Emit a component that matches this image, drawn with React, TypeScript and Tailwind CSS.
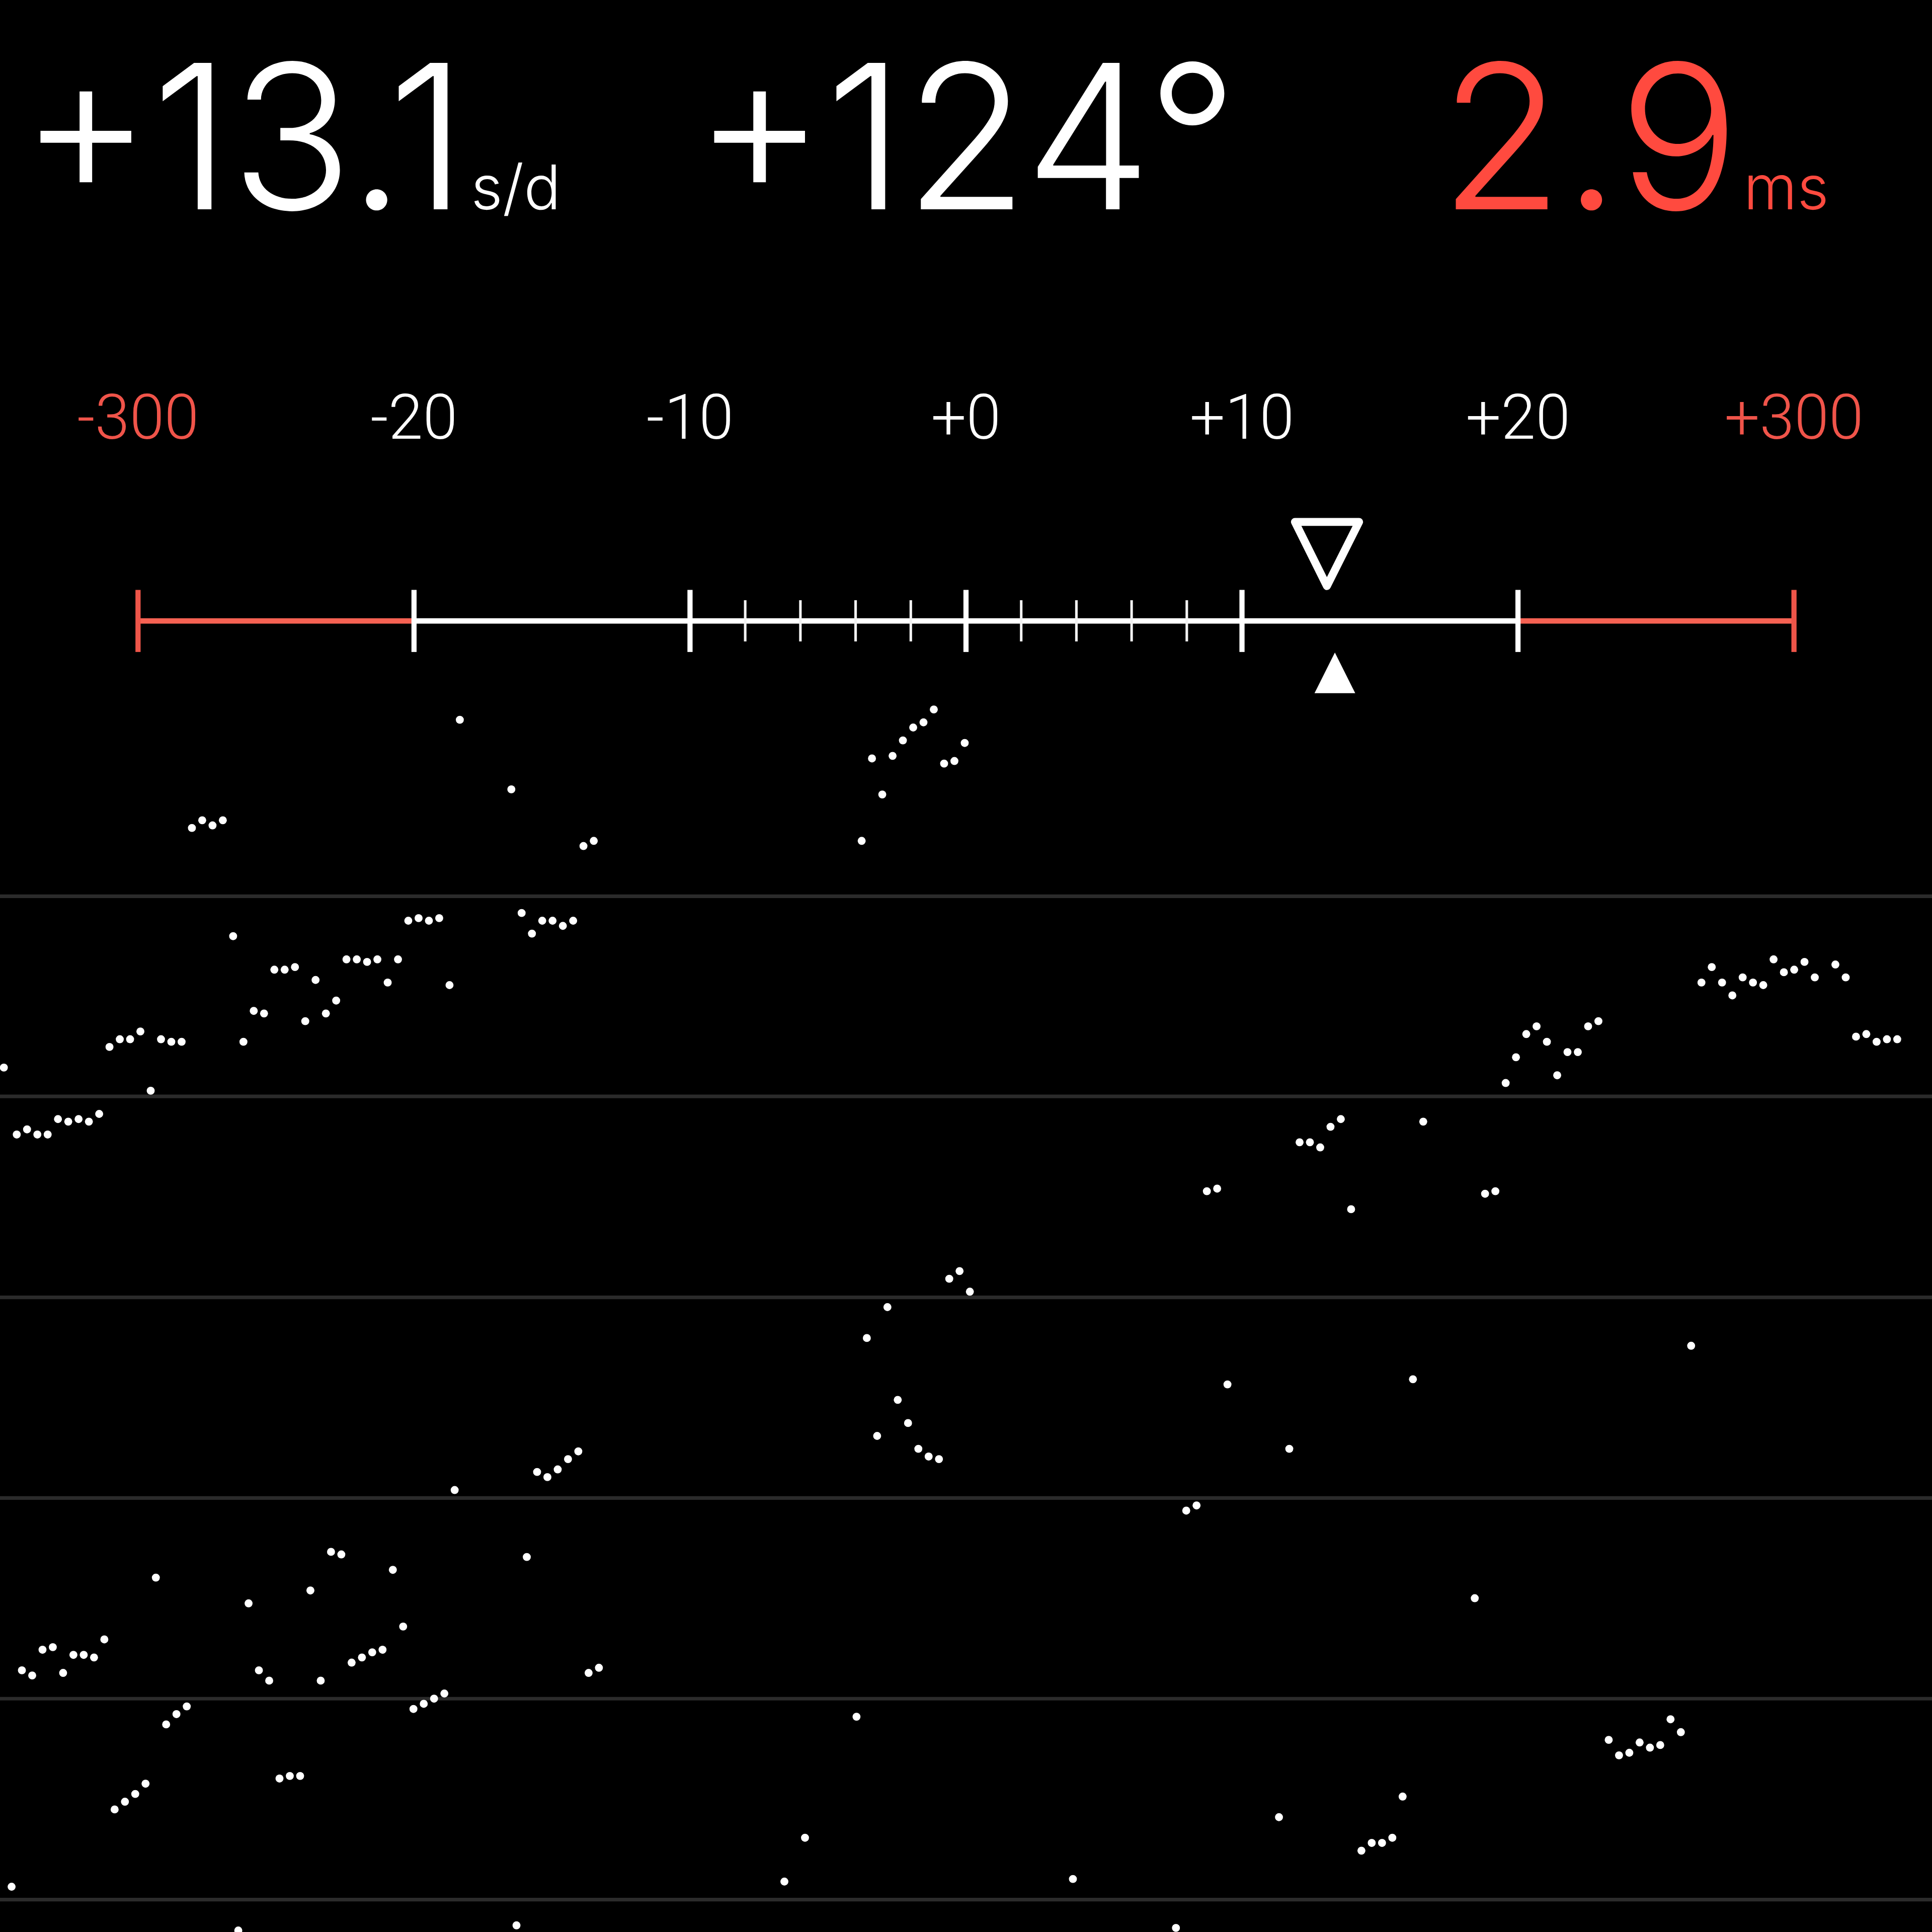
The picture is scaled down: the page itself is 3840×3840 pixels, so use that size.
const READINGS = [
  { label: 'Rate', value: '+13.1', unit: 's/d', className: 'justify-start pl-[40px] text-white' },
  { label: 'Amplitude', value: '+124°', unit: '', className: 'justify-center text-white' },
  { label: 'Beat error', value: '2.9', unit: 'ms', className: 'justify-center pl-[96px] text-[#ff4a3f]' },
]

const SCALE = [
  { text: '-300', limit: true },
  { text: '-20', limit: false },
  { text: '-10', limit: false },
  { text: '+0', limit: false },
  { text: '+10', limit: false },
  { text: '+20', limit: false },
  { text: '+300', limit: true },
]

// Width of one scale column, the drawings are 750 units wide
const STEP = 750 / 7

const MINOR_TICKS = [-4, -3, -2, -1, 1, 2, 3, 4]

const GRID_LINES = [348, 425.7, 503.7, 581.6, 659.5, 737.5]

// One [x, y] pair per recorded beat
const BEATS = [
  [178, 279], [198, 306], [74, 321], [78, 318], [82, 320], [86, 318], [226, 328], [230, 326],
  [158, 357], [162, 356], [166, 357], [170, 356], [202, 354], [206, 362], [210, 357], [214, 357],
  [218, 359], [222, 357], [90, 363], [106, 376], [110, 376], [114, 375], [122, 380], [134, 372],
  [138, 372], [142, 373], [146, 372], [154, 372], [150, 381], [174, 382], [130, 388], [126, 393],
  [118, 396], [98, 392], [102, 393], [94, 404], [42, 406], [46, 403], [50, 403], [54, 400],
  [62, 403], [66, 404], [70, 404], [1, 414], [58, 423], [6, 440], [10, 438], [14, 440],
  [18, 440], [22, 434], [26, 435], [30, 434], [34, 435], [38, 432],
  [362, 275], [358, 280], [354, 282], [350, 287], [346, 293], [338, 294], [342, 308], [334, 326],
  [374, 288], [370, 295], [366, 296],
  [660, 381], [664, 375], [668, 381], [672, 386], [676, 379], [680, 381], [684, 382], [688, 372],
  [692, 377], [696, 376], [700, 373], [704, 379], [712, 374], [716, 379], [584, 420], [588, 410],
  [592, 401], [596, 398], [600, 404], [604, 417], [608, 408], [612, 408], [616, 398], [620, 396],
  [720, 402], [724, 401], [728, 404], [732, 403], [736, 403], [504, 443], [508, 443], [512, 445],
  [516, 437], [520, 434], [552, 435], [468, 462], [472, 461], [524, 469], [576, 463], [580, 462],
  [176, 578], [208, 571], [212, 573], [216, 570], [220, 566], [224, 563], [128, 602], [132, 603],
  [120, 617], [152, 609], [204, 604], [60, 612], [96, 622], [156, 631], [40, 636], [20, 639],
  [16, 640], [28, 642], [32, 642], [36, 643], [8, 648], [12, 650], [24, 649], [100, 648],
  [104, 652], [124, 652], [136, 645], [140, 643], [144, 641], [148, 640], [228, 649], [232, 647],
  [172, 657], [168, 659], [164, 661], [160, 663], [72, 662], [68, 665], [64, 669], [56, 692],
  [52, 696], [48, 699], [44, 702], [108, 690], [112, 689], [116, 689], [4, 732], [92, 749],
  [200, 747],
  [368, 496], [372, 493], [376, 501], [344, 507], [336, 519], [348, 543], [352, 552], [340, 557],
  [356, 562], [360, 565], [364, 566], [476, 537], [460, 586], [464, 584], [332, 666], [312, 713],
  [304, 730], [416, 729], [456, 748],
  [656, 522], [548, 535], [500, 562], [572, 620], [648, 667], [652, 672], [624, 675], [628, 681],
  [632, 680], [636, 676], [640, 678], [644, 677], [544, 697], [496, 705], [528, 718], [532, 715],
  [536, 715], [540, 713],
]

function Readings() {
  return (
    <header className="grid grid-cols-3 pt-[70px] font-light font-['Inter','Liberation_Sans',sans-serif]">
      {READINGS.map((r) => (
        <div key={r.label} aria-label={r.label} className={`flex items-baseline gap-2 whitespace-nowrap ${r.className}`}>
          <span className="text-[400px] leading-[400px]">{r.value}</span>
          {r.unit && <span className="text-[122px] leading-[122px]">{r.unit}</span>}
        </div>
      ))}
    </header>
  )
}

function Gauge() {
  return (
    <section>
      <div className="grid grid-cols-7 mt-[300px] text-center text-[124px] leading-[120px] font-light font-['Roboto','Liberation_Sans',sans-serif]">
        {SCALE.map((s) => (
          <span key={s.text} className={s.limit ? 'text-[#f0544a]' : 'text-white'}>
            {s.text}
          </span>
        ))}
      </div>

      <svg viewBox="0 200 750 70" className="block w-full mt-[134px]" aria-hidden="true">
        {/* Axis */}
        <rect x={STEP * 0.5} y="240" width={STEP} height="2.1" fill="#f66253" />
        <rect x={STEP * 5.5} y="240" width={STEP} height="2.1" fill="#f66253" />
        <rect x={STEP * 1.5} y="240" width={STEP * 4} height="2.1" fill="#fff" />

        {/* Ticks */}
        {SCALE.map((s, i) => (
          <rect
            key={s.text}
            x={STEP * (i + 0.5) - 1}
            y="229"
            width="2"
            height="24.1"
            fill={s.limit ? '#ee5549' : '#fff'}
          />
        ))}
        {MINOR_TICKS.map((n) => (
          <rect key={n} x={375 + (n * STEP) / 5 - 0.5} y="233" width="1" height="16" fill="#f2f2f2" />
        ))}

        {/* Average and current rate markers */}
        <path
          d="M502.7 202.6H527.6L515.1 227.5Z"
          fill="none"
          stroke="#fff"
          strokeWidth="3.1"
          strokeLinejoin="round"
        />
        <path d="M518.2 253.3L526.1 269.1H510.3Z" fill="#fff" />
      </svg>
    </section>
  )
}

function Trace() {
  return (
    <svg viewBox="0 270 750 480" className="block w-full" role="img" aria-label="Beat trace">
      {GRID_LINES.map((y) => (
        <line key={y} x1="0" x2="750" y1={y} y2={y} stroke="#2b2b2b" strokeWidth="1.4" />
      ))}
      {BEATS.map(([x, y]) => (
        <circle key={`${x}-${y}`} cx={x + 0.5} cy={y + 0.5} r="1.55" fill="#fff" />
      ))}
    </svg>
  )
}

export default function App() {
  return (
    <main className="min-h-screen overflow-hidden bg-black">
      <Readings />
      <Gauge />
      <Trace />
    </main>
  )
}
